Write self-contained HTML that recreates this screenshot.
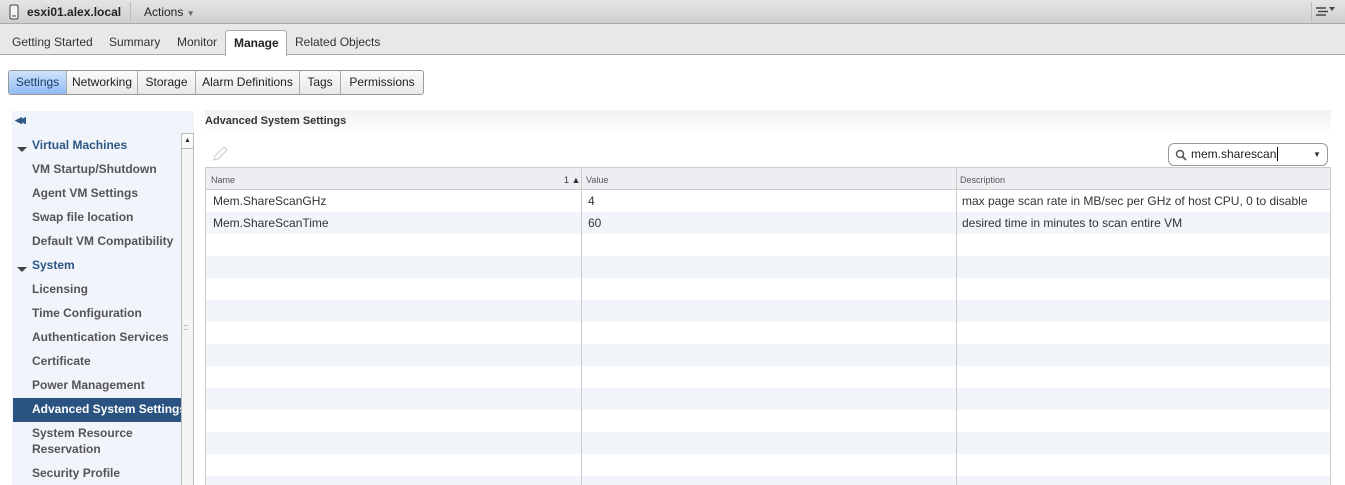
<!DOCTYPE html>
<html><head><style>
*{box-sizing:border-box;margin:0;padding:0}
html,body{width:1345px;height:485px;overflow:hidden}
body{background:#fff;font-family:"Liberation Sans",Arial,sans-serif;font-size:12px;color:#333;position:relative}
.a{position:absolute}
.hdr{left:0;top:0;width:1345px;height:24px;background:linear-gradient(#e4e4e4,#cfcfcf);border-bottom:1px solid #aaa}
.tabs{left:0;top:24px;width:1345px;height:31px;background:#e8e8e8;border-bottom:1px solid #a8a8a8}
.tab{position:absolute;top:35px;font-size:12px;color:#333}
.sub{left:8px;top:70px;height:25px;display:flex;border:1px solid #999;border-radius:3px;overflow:hidden;background:linear-gradient(#fbfbfb,#e8e8e8)}
.sub div{line-height:23px;border-right:1px solid #aaa;font-size:12px;color:#222;text-align:center}
.sub div:last-child{border-right:none}
.left{left:12px;top:111px;width:182px;height:374px;background:#f1f4fa}
.it{position:absolute;left:32px;font-weight:bold;color:#555;font-size:12px}
.grp{position:absolute;left:32px;font-weight:bold;color:#2d5785;font-size:12px}
.row{position:absolute;left:206px;width:1124px;height:22px}
.tri{position:absolute;left:17px;width:0;height:0;border-left:5px solid transparent;border-right:5px solid transparent;border-top:5px solid #444}
</style></head><body>
<div class="a hdr"></div>
<svg class="a" style="left:9px;top:4px" width="10" height="16"><rect x="1" y="1" width="8" height="14" rx="1.5" fill="#f4f4f4" stroke="#444"/><line x1="3" y1="12" x2="7" y2="12" stroke="#444"/></svg>
<div class="a" style="left:27px;top:5px;font-weight:bold;font-size:12px;color:#222">esxi01.alex.local</div>
<div class="a" style="left:130px;top:2px;width:1px;height:20px;background:#bbb"></div>
<div class="a" style="left:144px;top:5px;color:#222">Actions <span style="font-size:8px;color:#666">▼</span></div>
<div class="a" style="left:1311px;top:2px;width:1px;height:20px;background:#bbb"></div>
<svg class="a" style="left:1316px;top:6px" width="22" height="10"><line x1="0" y1="2" x2="10" y2="2" stroke="#444" stroke-width="1.5"/><line x1="2" y1="5.5" x2="12" y2="5.5" stroke="#444" stroke-width="1.5"/><line x1="0" y1="9" x2="10" y2="9" stroke="#444" stroke-width="1.5"/><path d="M13 1h6l-3 4z" fill="#444"/></svg>
<div class="a tabs"></div>
<div class="tab" style="left:12px">Getting Started</div>
<div class="tab" style="left:109px">Summary</div>
<div class="tab" style="left:177px">Monitor</div>
<div class="a" style="left:225px;top:30px;width:62px;height:26px;background:#fff;border:1px solid #aaa;border-bottom:none;border-radius:3px 3px 0 0"></div>
<div class="tab" style="left:234px;top:36px;font-weight:bold;color:#222">Manage</div>
<div class="tab" style="left:295px">Related Objects</div>
<div class="a sub">
<div style="background:linear-gradient(#cfe3fb,#8fbcf3);color:#1a3c66;width:58px">Settings</div>
<div style="width:71px">Networking</div><div style="width:58px">Storage</div><div style="width:104px">Alarm Definitions</div><div style="width:41px">Tags</div><div style="width:82px">Permissions</div></div>
<div class="a left"></div>
<div class="a" style="left:15px;top:115px;font-size:9px;color:#2d5785;font-weight:bold;letter-spacing:-3px">◀◀</div>
<div class="a" style="left:181px;top:133px;width:13px;height:352px;background:#f5f5f5;border-left:1px solid #bbb;border-right:1px solid #bbb"></div>
<div class="a" style="left:181px;top:133px;width:13px;height:16px;background:#fafafa;border:1px solid #bbb;font-size:7px;text-align:center;line-height:14px">▲</div>
<div class="a" style="left:183px;top:322px;font-size:9px;color:#666">::</div>
<div class="tri" style="top:147px"></div>
<div class="grp" style="top:138px">Virtual Machines</div>
<div class="it" style="top:162px">VM Startup/Shutdown</div>
<div class="it" style="top:186px">Agent VM Settings</div>
<div class="it" style="top:210px">Swap file location</div>
<div class="it" style="top:234px">Default VM Compatibility</div>
<div class="tri" style="top:267px"></div>
<div class="grp" style="top:258px">System</div>
<div class="it" style="top:282px">Licensing</div>
<div class="it" style="top:306px">Time Configuration</div>
<div class="it" style="top:330px">Authentication Services</div>
<div class="it" style="top:354px">Certificate</div>
<div class="it" style="top:378px">Power Management</div>
<div class="a" style="left:13px;top:398px;width:168px;height:24px;background:#2b5381"></div>
<div class="it" style="top:402px;color:#fff;white-space:nowrap;width:149px;overflow:hidden">Advanced System Settings</div>
<div class="it" style="top:425px;line-height:16px">System Resource<br>Reservation</div>
<div class="it" style="top:466px">Security Profile</div>
<div class="a" style="left:205px;top:110px;width:1126px;height:26px;background:linear-gradient(#f2f2f2,#fff)"></div>
<div class="a" style="left:205px;top:115px;font-weight:bold;font-size:11px;color:#333">Advanced System Settings</div>
<svg class="a" style="left:212px;top:146px" width="16" height="16"><path d="M2 14l1-4 9-9 3 3-9 9z" fill="none" stroke="#ccc"/></svg>
<div class="a" style="left:1168px;top:143px;width:160px;height:23px;border:1px solid #999;border-radius:6px;background:#fff"></div>
<svg class="a" style="left:1175px;top:149px" width="12" height="12"><circle cx="5" cy="5" r="3.5" fill="none" stroke="#555" stroke-width="1.5"/><line x1="7.5" y1="7.5" x2="11" y2="11" stroke="#555" stroke-width="1.8"/></svg>
<div class="a" style="left:1191px;top:147px;color:#222">mem.sharescan<span style="border-left:1px solid #000;margin-left:1px"></span></div>
<div class="a" style="left:1313px;top:150px;font-size:8px;color:#333">▼</div>
<div class="a" style="left:205px;top:167px;width:1126px;height:318px;border:1px solid #ccc;border-bottom:none"></div>
<div class="a" style="left:206px;top:168px;width:1124px;height:22px;background:#eceef1;border-bottom:1px solid #ccc"></div>
<div class="a" style="left:211px;top:175px;font-size:9px;color:#555">Name</div>
<div class="a" style="left:564px;top:175px;font-size:9px;color:#333">1 ▲</div>
<div class="a" style="left:586px;top:175px;font-size:9px;color:#555">Value</div>
<div class="a" style="left:960px;top:175px;font-size:9px;color:#555">Description</div>
<div class="row" style="top:212px;background:#f2f5f9"></div>
<div class="row" style="top:256px;background:#f2f5f9"></div>
<div class="row" style="top:300px;background:#f2f5f9"></div>
<div class="row" style="top:344px;background:#f2f5f9"></div>
<div class="row" style="top:388px;background:#f2f5f9"></div>
<div class="row" style="top:432px;background:#f2f5f9"></div>
<div class="row" style="top:476px;height:9px;background:#f2f5f9"></div>
<div class="a" style="left:581px;top:168px;width:1px;height:317px;background:#ccc"></div>
<div class="a" style="left:956px;top:168px;width:1px;height:317px;background:#ccc"></div>
<div class="a" style="left:213px;top:194px">Mem.ShareScanGHz</div>
<div class="a" style="left:588px;top:194px">4</div>
<div class="a" style="left:962px;top:194px">max page scan rate in MB/sec per GHz of host CPU, 0 to disable</div>
<div class="a" style="left:213px;top:216px">Mem.ShareScanTime</div>
<div class="a" style="left:588px;top:216px">60</div>
<div class="a" style="left:962px;top:216px">desired time in minutes to scan entire VM</div>
</body></html>
